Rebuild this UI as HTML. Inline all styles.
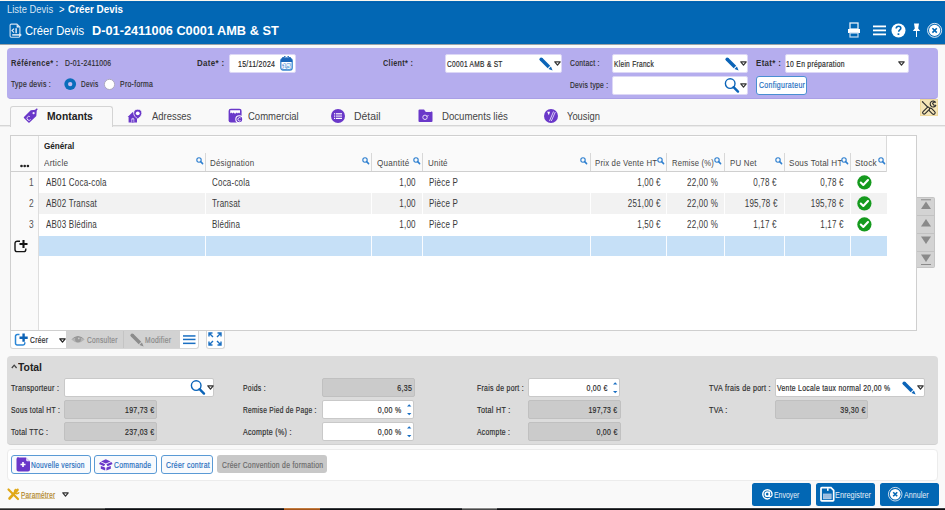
<!DOCTYPE html>
<html><head><meta charset="utf-8">
<style>
*{box-sizing:border-box;margin:0;padding:0}
html,body{width:945px;height:510px;overflow:hidden;background:#f9f9f9;font-family:"Liberation Sans",sans-serif;color:#333}
.a{position:absolute}
.t{position:absolute;white-space:pre;line-height:1}
svg{overflow:visible}
.s{-webkit-text-stroke:0.18px currentColor}
</style></head><body>
<div class="a" style="left:0px;top:0px;width:945px;height:44px;background:#0267b4"></div>
<div class="a" style="left:0px;top:0px;width:945px;height:1px;background:#fbf7ee"></div>
<div class="a" style="left:0px;top:2px;width:945px;height:1px;background:#015fae"></div>
<div class="a" style="left:0px;top:44px;width:945px;height:1px;background:#9aa3a8"></div>
<div class="t" style="left:6.7px;top:5px;font-size:10.17px;color:#d6e4f3;transform:scaleX(0.929);transform-origin:0 0;">Liste Devis</div>
<div class="t" style="left:58.7px;top:5px;font-size:10.17px;color:#fff;transform:scaleX(0.926);transform-origin:0 0;">&gt;</div>
<div class="t" style="left:68px;top:5px;font-size:10.17px;color:#fff;font-weight:bold;transform:scaleX(0.973);transform-origin:0 0;">Créer Devis</div>
<div class="t" style="left:25.4px;top:24px;font-size:13.08px;color:#fff;transform:scaleX(0.857);transform-origin:0 0;">Créer Devis</div>
<div class="t" style="left:91.6px;top:25px;font-size:12.65px;color:#fff;font-weight:bold;transform:scaleX(1.009);transform-origin:0 0;">D-01-2411006 C0001 AMB &amp; ST</div>
<svg class="a" style="left:9px;top:23px" width="14" height="15" viewBox="0 0 14 15"><path d="M1.1 2.3a1.2 1.2 0 0 1 1.2-1.2h5.6l3 3v8.9a1.2 1.2 0 0 1-1.2 1.2H2.3a1.2 1.2 0 0 1-1.2-1.2z" fill="none" stroke="#d3e2f1" stroke-width="1.1"/><path d="M7.6 1.2v3.2h3.2z" fill="#e6eef7"/><path d="M5 5.6l-2 2 2 2" fill="none" stroke="#e6eef7" stroke-width="1.2"/><rect x="6.3" y="5.2" width="1.7" height="5" fill="#c5d8ec"/><path d="M3.2 11.9h7.6" stroke="#e9f0f7" stroke-width="1.5"/><path d="M10.3 10.1l2.5 1.8-2.5 1.8z" fill="#e9f0f7"/></svg>
<svg class="a" style="left:847px;top:22px" width="14" height="16" viewBox="0 0 14 16"><rect x="3" y="1" width="8" height="6" fill="none" stroke="#e8f0f8" stroke-width="1.3"/><rect x="1" y="7" width="12" height="4" fill="#fff"/><rect x="3" y="11" width="8" height="4" fill="none" stroke="#c9dbee" stroke-width="1.2"/></svg>
<svg class="a" style="left:873px;top:25px" width="13" height="11" viewBox="0 0 13 11"><rect x="0" y="0.5" width="13" height="1.8" fill="#fff"/><rect x="0" y="4.5" width="13" height="1.8" fill="#fff"/><rect x="0" y="8.5" width="13" height="1.8" fill="#fff"/></svg>
<svg class="a" style="left:891px;top:23px" width="15" height="15" viewBox="0 0 15 15"><circle cx="7.5" cy="7.5" r="7" fill="#fff"/><path d="M5.2 5.6c0-1.5 1-2.3 2.3-2.3s2.3 .8 2.3 2c0 1.6-2.1 1.7-2.1 3.4" fill="none" stroke="#0267b4" stroke-width="1.6"/><rect x="6.6" y="10.3" width="1.7" height="1.7" fill="#0267b4"/></svg>
<svg class="a" style="left:912px;top:23px" width="9" height="14" viewBox="0 0 9 14"><path d="M2 0.5h5l-0.8 5 2 2.5h-7.4l2-2.5z" fill="#fff"/><rect x="4" y="8" width="1" height="6" fill="#fff"/></svg>
<svg class="a" style="left:927px;top:23px" width="16" height="16" viewBox="0 0 16 16"><circle cx="7.6" cy="7.4" r="7" fill="none" stroke="#e6eef7" stroke-width="1"/><circle cx="7.6" cy="7.4" r="5.6" fill="#fff"/><path d="M5.4 5.2l4.4 4.4M9.8 5.2l-4.4 4.4" stroke="#0267b4" stroke-width="1.6"/></svg>
<div class="a" style="left:7px;top:48px;width:931px;height:51px;background:#b5adee;border-bottom:1px solid #a99fe6;border-radius:4px"></div>
<div class="t" style="left:11px;top:60px;font-size:8.14px;color:#2e2e2e;font-weight:bold;transform:scaleX(0.923);transform-origin:0 0;letter-spacing:0.35px;">Référence* :</div>
<div class="t s" style="left:64.7px;top:60px;font-size:8.14px;color:#2e2e2e;transform:scaleX(0.836);transform-origin:0 0;letter-spacing:0.35px;">D-01-2411006</div>
<div class="t s" style="left:11px;top:81px;font-size:8.14px;color:#2e2e2e;transform:scaleX(0.842);transform-origin:0 0;letter-spacing:0.35px;">Type devis :</div>
<svg class="a" style="left:64px;top:78px" width="13" height="13" viewBox="0 0 13 13"><circle cx="6.2" cy="6.1" r="5.9" fill="#0a6dbb"/><circle cx="6.2" cy="6.1" r="2.2" fill="#c4bdf0"/></svg>
<div class="t s" style="left:80.8px;top:81px;font-size:8.14px;color:#2e2e2e;transform:scaleX(0.786);transform-origin:0 0;letter-spacing:0.35px;">Devis</div>
<svg class="a" style="left:104px;top:78px" width="13" height="13" viewBox="0 0 13 13"><circle cx="5.5" cy="6.4" r="5.1" fill="#fff" stroke="#a9a5b8" stroke-width="0.9"/></svg>
<div class="t s" style="left:119.9px;top:81px;font-size:8.14px;color:#2e2e2e;transform:scaleX(0.846);transform-origin:0 0;letter-spacing:0.35px;">Pro-forma</div>
<div class="t" style="left:197px;top:60px;font-size:8.14px;color:#2e2e2e;font-weight:bold;transform:scaleX(0.979);transform-origin:0 0;letter-spacing:0.35px;">Date* :</div>
<div class="a" style="left:229px;top:54px;width:67px;height:19px;background:#fff;border:1px solid #dcd7f6;border-radius:2px"></div>
<div class="t s" style="left:238px;top:61px;font-size:8.14px;color:#2a2a2a;transform:scaleX(0.855);transform-origin:0 0;letter-spacing:0.35px;">15/11/2024</div>
<svg class="a" style="left:280px;top:56px" width="14" height="15" viewBox="0 0 14 15"><rect x="0.8" y="2.6" width="11.4" height="11.4" rx="2.2" fill="none" stroke="#3a86d0" stroke-width="1.3"/><path d="M0.8 4.8a2.2 2.2 0 0 1 2.2-2.2h7a2.2 2.2 0 0 1 2.2 2.2v1.2h-11.4z" fill="#1a66b8"/><circle cx="3.2" cy="2.2" r="1.3" fill="#1a66b8"/><circle cx="6.5" cy="2.6" r="1.3" fill="#1a66b8"/><circle cx="9.8" cy="2.2" r="1.3" fill="#1a66b8"/><circle cx="4.8" cy="0.9" r="0.9" fill="#1a66b8"/><circle cx="8.2" cy="0.9" r="0.9" fill="#1a66b8"/><text x="6.5" y="12.9" font-size="7.6" font-weight="bold" text-anchor="middle" fill="#fff" stroke="#3a86d0" stroke-width="0.9" paint-order="stroke" font-family="Liberation Sans">15</text></svg>
<div class="t" style="left:383px;top:60px;font-size:8.14px;color:#2e2e2e;font-weight:bold;transform:scaleX(0.894);transform-origin:0 0;letter-spacing:0.35px;">Client* :</div>
<div class="a" style="left:445px;top:54px;width:117px;height:19px;background:#fff;border:1px solid #dcd7f6;border-radius:2px"></div>
<div class="t s" style="left:446.5px;top:61px;font-size:8.14px;color:#2a2a2a;transform:scaleX(0.812);transform-origin:0 0;letter-spacing:0.35px;">C0001 AMB &amp; ST</div>
<svg class="a" style="left:539px;top:57px" width="15" height="15" viewBox="0 0 15 15"><circle cx="2.2" cy="2.2" r="1.75" fill="#0b64b8"/><path d="M0.96 3.44 L3.44 0.96 L11.2 8.7 L8.7 11.2z" fill="#0b64b8"/><path d="M9.5 11.9 L11.9 9.5 L13.6 13.6z" fill="#0b64b8"/></svg>
<svg class="a" style="left:554px;top:61px" width="7" height="5" viewBox="0 0 7 5"><path d="M0.8 0.8h5.4l-2.7 3.4z" fill="none" stroke="#333" stroke-width="1.2" stroke-linejoin="round"/></svg>
<div class="t s" style="left:569.5px;top:60px;font-size:8.14px;color:#2e2e2e;transform:scaleX(0.834);transform-origin:0 0;letter-spacing:0.35px;">Contact :</div>
<div class="a" style="left:612px;top:54px;width:136px;height:19px;background:#fff;border:1px solid #dcd7f6;border-radius:2px"></div>
<div class="t s" style="left:614px;top:61px;font-size:8.14px;color:#2a2a2a;transform:scaleX(0.811);transform-origin:0 0;letter-spacing:0.35px;">Klein Franck</div>
<svg class="a" style="left:725px;top:57px" width="15" height="15" viewBox="0 0 15 15"><circle cx="2.2" cy="2.2" r="1.75" fill="#0b64b8"/><path d="M0.96 3.44 L3.44 0.96 L11.2 8.7 L8.7 11.2z" fill="#0b64b8"/><path d="M9.5 11.9 L11.9 9.5 L13.6 13.6z" fill="#0b64b8"/></svg>
<svg class="a" style="left:740px;top:61px" width="7" height="5" viewBox="0 0 7 5"><path d="M0.8 0.8h5.4l-2.7 3.4z" fill="none" stroke="#333" stroke-width="1.2" stroke-linejoin="round"/></svg>
<div class="t s" style="left:569.5px;top:82px;font-size:8.14px;color:#2e2e2e;transform:scaleX(0.822);transform-origin:0 0;letter-spacing:0.35px;">Devis type :</div>
<div class="a" style="left:612px;top:76px;width:136px;height:19px;background:#fff;border:1px solid #dcd7f6;border-radius:2px"></div>
<svg class="a" style="left:724px;top:78px" width="16" height="15" viewBox="0 0 16 15"><g transform="scale(1.0)"><circle cx="6.2" cy="5.6" r="4.8" fill="none" stroke="#0b64b8" stroke-width="1.4"/><path d="M9.6 9.2 L14 13.6" stroke="#0b64b8" stroke-width="2.4" stroke-linecap="round"/></g></svg>
<svg class="a" style="left:740px;top:83px" width="7" height="5" viewBox="0 0 7 5"><path d="M0.8 0.8h5.4l-2.7 3.4z" fill="none" stroke="#333" stroke-width="1.2" stroke-linejoin="round"/></svg>
<div class="t" style="left:755.6px;top:60px;font-size:8.14px;color:#2e2e2e;font-weight:bold;transform:scaleX(0.976);transform-origin:0 0;letter-spacing:0.35px;">Etat* :</div>
<div class="a" style="left:785px;top:54px;width:124px;height:19px;background:#fff;border:1px solid #dcd7f6;border-radius:2px"></div>
<div class="t s" style="left:786.3px;top:61px;font-size:8.14px;color:#2a2a2a;transform:scaleX(0.835);transform-origin:0 0;letter-spacing:0.35px;">10 En préparation</div>
<svg class="a" style="left:898px;top:61px" width="7" height="5" viewBox="0 0 7 5"><path d="M0.8 0.8h5.4l-2.7 3.4z" fill="none" stroke="#333" stroke-width="1.2" stroke-linejoin="round"/></svg>
<div class="a" style="left:756px;top:76px;width:51px;height:19px;background:#fff;border:1px solid #4a8fd2;border-radius:3px"></div>
<div class="t s" style="left:758.5px;top:82px;font-size:8.14px;color:#1f6fbf;transform:scaleX(0.859);transform-origin:0 0;letter-spacing:0.35px;">Configurateur</div>
<div class="a" style="left:0px;top:125px;width:945px;height:1px;background:#d6d6d6"></div>
<div class="a" style="left:0px;top:126px;width:945px;height:1px;background:#ebebeb"></div>
<div class="a" style="left:10px;top:106px;width:103px;height:21px;background:#f9f9f9;border:1px solid #d4d4d4;border-bottom:none;border-radius:3px 3px 0 0"></div>
<div class="a" style="left:11px;top:125px;width:101px;height:2px;background:#f9f9f9"></div>
<div class="t" style="left:46.6px;top:112px;font-size:10.17px;color:#222;font-weight:bold;transform:scaleX(1.016);transform-origin:0 0;">Montants</div>
<div class="t" style="left:151.8px;top:112px;font-size:10.17px;color:#444;transform:scaleX(0.929);transform-origin:0 0;">Adresses</div>
<div class="t" style="left:247.6px;top:112px;font-size:10.17px;color:#444;transform:scaleX(0.936);transform-origin:0 0;">Commercial</div>
<div class="t" style="left:354px;top:112px;font-size:10.17px;color:#444;transform:scaleX(1.023);transform-origin:0 0;">Détail</div>
<div class="t" style="left:441.5px;top:112px;font-size:10.17px;color:#444;transform:scaleX(0.948);transform-origin:0 0;">Documents liés</div>
<div class="t" style="left:567.1px;top:112px;font-size:10.17px;color:#444;transform:scaleX(0.924);transform-origin:0 0;">Yousign</div>
<svg class="a" style="left:23px;top:108px" width="16" height="16" viewBox="0 0 16 16"><path d="M1.5 9.5 L8 3 L13 2.5 L12.6 7.6 L6 14z" fill="#6a38c9" stroke="#6a38c9" stroke-width="1.5" stroke-linejoin="round"/><path d="M11.5 3.5 L14.3 0.8" stroke="#6a38c9" stroke-width="1.4"/><circle cx="10.6" cy="5.2" r="1.1" fill="#f0eafc"/><path d="M6.8 8.5a2 2 0 1 0 .8 3" fill="none" stroke="#e6dcf8" stroke-width="1"/></svg>
<svg class="a" style="left:127px;top:109px" width="16" height="15" viewBox="0 0 16 15"><path d="M0.6 8 L5.8 3 L11 8 H10 V13.6 H1.6 V8z" fill="#6a38c9"/><path d="M4.3 13.6 V10.2 a1.5 1.5 0 0 1 3 0 V13.6" fill="#c9b6ef"/><rect x="5.2" y="10.6" width="1.2" height="3" fill="#6a38c9"/><path d="M10.75 0.2 a4.1 4.1 0 0 1 4.1 4.1 c0 2.4 -2.4 4.3 -4.1 5.7 c-1.7 -1.4 -4.1 -3.3 -4.1 -5.7 a4.1 4.1 0 0 1 4.1 -4.1z" fill="#6a38c9" stroke="#f9f9f9" stroke-width="0.8"/><circle cx="10.75" cy="4.3" r="1.9" fill="#fff"/></svg>
<svg class="a" style="left:228px;top:108px" width="16" height="16" viewBox="0 0 16 16"><rect x="0.6" y="0.8" width="13" height="13.6" rx="2.2" fill="#6a38c9"/><path d="M2.2 2.3 H12 V5.6 L11 4.6 L9.9 5.6 L8.8 4.6 L7.7 5.6 H6.6 L5.5 4.6 L4.4 5.6 L3.3 4.6 L2.2 5.6z" fill="#fff"/><circle cx="11.3" cy="11.3" r="3.5" fill="#6a38c9" stroke="#fff" stroke-width="1.1"/><path d="M12.6 9.9 a1.7 1.7 0 1 0 0 2.8" fill="none" stroke="#fff" stroke-width="0.9"/></svg>
<svg class="a" style="left:331px;top:109px" width="15" height="15" viewBox="0 0 15 15"><circle cx="7" cy="7" r="7" fill="#6a38c9"/><rect x="3" y="4.2" width="1.2" height="1.2" fill="#fff"/><rect x="5" y="4.2" width="6" height="1.2" fill="#fff"/><rect x="3" y="6.5" width="1.2" height="1.2" fill="#fff"/><rect x="5" y="6.5" width="6" height="1.2" fill="#e8e0f8"/><rect x="3" y="8.8" width="1.2" height="1.2" fill="#fff"/><rect x="5" y="8.8" width="6" height="1.2" fill="#fff"/></svg>
<svg class="a" style="left:418px;top:109px" width="15" height="14" viewBox="0 0 15 14"><path d="M0.5 1.5a1 1 0 0 1 1-1h4.5l1.8 2h5.7a1 1 0 0 1 1 1v8.5a1 1 0 0 1-1 1h-12a1 1 0 0 1-1-1z" fill="#6a38c9"/><path d="M6.5 1.3h6.5v1.6h-5z" fill="#f3eefc"/><circle cx="7" cy="8.3" r="2.2" fill="none" stroke="#e3d8f7" stroke-width="1"/><path d="M8.5 7.5l2-1" stroke="#e3d8f7" stroke-width="0.9"/></svg>
<svg class="a" style="left:544px;top:109px" width="15" height="15" viewBox="0 0 15 15"><circle cx="7" cy="7" r="7" fill="#6a38c9"/><path d="M3.2 2.8h2.8l-1.2 3.4z" fill="#fff"/><path d="M9.5 2.5 L5.5 12" stroke="#d7c9f4" stroke-width="1"/><path d="M11.3 3 L7.3 12" stroke="#d7c9f4" stroke-width="1"/></svg>
<div class="a" style="left:920px;top:99px;width:18px;height:17px;background:#f4e4b6;border:1px solid #eed89c"></div>
<svg class="a" style="left:920px;top:99px" width="18" height="17" viewBox="0 0 18 17"><path d="M2.3 2.6 L9 9.3" stroke="#2a2a2a" stroke-width="1.2"/><path d="M1.6 1.9 L3.3 2.4 L2.8 3.6z" fill="#2a2a2a"/><g transform="rotate(45 12 12.2)"><rect x="8.4" y="10.6" width="7.4" height="3.2" rx="1.6" fill="#f4e4b6" stroke="#2a2a2a" stroke-width="1.1"/></g><g transform="rotate(-45 6 11.6)"><rect x="1.8" y="10.2" width="8.6" height="2.9" rx="1.45" fill="#f4e4b6" stroke="#2a2a2a" stroke-width="1.1"/></g><path d="M15.6 3.2 A3 3 0 1 0 15.8 6.4 L13.6 6 L12.6 4.4 L13.6 3z" fill="#f4e4b6" stroke="#2a2a2a" stroke-width="1.1" stroke-linejoin="round"/></svg>
<div class="a" style="left:10px;top:135px;width:907px;height:196px;background:#fff;border:1px solid #cfcfcf"></div>
<div class="a" style="left:11px;top:137px;width:876px;height:34px;background:#fafafa"></div>
<div class="a" style="left:11px;top:136px;width:27px;height:194px;background:#fafafa"></div>
<div class="a" style="left:38px;top:136px;width:1px;height:194px;background:#dedede"></div>
<div class="a" style="left:11px;top:171px;width:876px;height:1px;background:#cfcfcf"></div>
<div class="a" style="left:886px;top:136px;width:1px;height:36px;background:#dadada"></div>
<div class="a" style="left:39px;top:193px;width:848px;height:21px;background:#f2f2f2"></div>
<div class="a" style="left:39px;top:236px;width:848px;height:20px;background:#c6e0f7"></div>
<div class="a" style="left:205px;top:153px;width:1px;height:18px;background:#d8d8d8"></div>
<div class="a" style="left:205px;top:172px;width:1px;height:84px;background:rgba(255,255,255,0.9)"></div>
<div class="a" style="left:371px;top:153px;width:1px;height:18px;background:#d8d8d8"></div>
<div class="a" style="left:371px;top:172px;width:1px;height:84px;background:rgba(255,255,255,0.9)"></div>
<div class="a" style="left:422px;top:153px;width:1px;height:18px;background:#d8d8d8"></div>
<div class="a" style="left:422px;top:172px;width:1px;height:84px;background:rgba(255,255,255,0.9)"></div>
<div class="a" style="left:590px;top:153px;width:1px;height:18px;background:#d8d8d8"></div>
<div class="a" style="left:590px;top:172px;width:1px;height:84px;background:rgba(255,255,255,0.9)"></div>
<div class="a" style="left:666px;top:153px;width:1px;height:18px;background:#d8d8d8"></div>
<div class="a" style="left:666px;top:172px;width:1px;height:84px;background:rgba(255,255,255,0.9)"></div>
<div class="a" style="left:724px;top:153px;width:1px;height:18px;background:#d8d8d8"></div>
<div class="a" style="left:724px;top:172px;width:1px;height:84px;background:rgba(255,255,255,0.9)"></div>
<div class="a" style="left:784px;top:153px;width:1px;height:18px;background:#d8d8d8"></div>
<div class="a" style="left:784px;top:172px;width:1px;height:84px;background:rgba(255,255,255,0.9)"></div>
<div class="a" style="left:850px;top:153px;width:1px;height:18px;background:#d8d8d8"></div>
<div class="a" style="left:850px;top:172px;width:1px;height:84px;background:rgba(255,255,255,0.9)"></div>
<div class="t" style="left:44.2px;top:142px;font-size:9.3px;color:#222;font-weight:bold;transform:scaleX(0.875);transform-origin:0 0;">Général</div>
<div class="t" style="left:44.2px;top:159px;font-size:9.3px;color:#464646;transform:scaleX(0.878);transform-origin:0 0;letter-spacing:0.25px;">Article</div>
<div class="t" style="left:210.3px;top:159px;font-size:9.3px;color:#464646;transform:scaleX(0.856);transform-origin:0 0;letter-spacing:0.25px;">Désignation</div>
<div class="t" style="left:376.7px;top:159px;font-size:9.3px;color:#464646;transform:scaleX(0.872);transform-origin:0 0;letter-spacing:0.25px;">Quantité</div>
<div class="t" style="left:427.7px;top:159px;font-size:9.3px;color:#464646;transform:scaleX(0.860);transform-origin:0 0;letter-spacing:0.25px;">Unité</div>
<div class="t" style="left:595px;top:159px;font-size:9.3px;color:#464646;transform:scaleX(0.837);transform-origin:0 0;letter-spacing:0.25px;">Prix de Vente HT</div>
<div class="t" style="left:671.6px;top:159px;font-size:9.3px;color:#464646;transform:scaleX(0.824);transform-origin:0 0;letter-spacing:0.25px;">Remise (%)</div>
<div class="t" style="left:729.5px;top:159px;font-size:9.3px;color:#464646;transform:scaleX(0.849);transform-origin:0 0;letter-spacing:0.25px;">PU Net</div>
<div class="t" style="left:788.6px;top:159px;font-size:9.3px;color:#464646;transform:scaleX(0.872);transform-origin:0 0;letter-spacing:0.25px;">Sous Total HT</div>
<div class="t" style="left:854.5px;top:159px;font-size:9.3px;color:#464646;transform:scaleX(0.895);transform-origin:0 0;letter-spacing:0.25px;">Stock</div>
<svg class="a" style="left:196px;top:156.5px" width="8" height="8" viewBox="0 0 8 8"><circle cx="3" cy="3" r="2.2" fill="none" stroke="#2d7fd0" stroke-width="1.1"/><path d="M4.6 4.6 L6.6 6.6" stroke="#2d7fd0" stroke-width="1.5" stroke-linecap="round"/></svg>
<svg class="a" style="left:361.5px;top:156.5px" width="8" height="8" viewBox="0 0 8 8"><circle cx="3" cy="3" r="2.2" fill="none" stroke="#2d7fd0" stroke-width="1.1"/><path d="M4.6 4.6 L6.6 6.6" stroke="#2d7fd0" stroke-width="1.5" stroke-linecap="round"/></svg>
<svg class="a" style="left:413px;top:156.5px" width="8" height="8" viewBox="0 0 8 8"><circle cx="3" cy="3" r="2.2" fill="none" stroke="#2d7fd0" stroke-width="1.1"/><path d="M4.6 4.6 L6.6 6.6" stroke="#2d7fd0" stroke-width="1.5" stroke-linecap="round"/></svg>
<svg class="a" style="left:580px;top:156.5px" width="8" height="8" viewBox="0 0 8 8"><circle cx="3" cy="3" r="2.2" fill="none" stroke="#2d7fd0" stroke-width="1.1"/><path d="M4.6 4.6 L6.6 6.6" stroke="#2d7fd0" stroke-width="1.5" stroke-linecap="round"/></svg>
<svg class="a" style="left:657px;top:156.5px" width="8" height="8" viewBox="0 0 8 8"><circle cx="3" cy="3" r="2.2" fill="none" stroke="#2d7fd0" stroke-width="1.1"/><path d="M4.6 4.6 L6.6 6.6" stroke="#2d7fd0" stroke-width="1.5" stroke-linecap="round"/></svg>
<svg class="a" style="left:714px;top:156.5px" width="8" height="8" viewBox="0 0 8 8"><circle cx="3" cy="3" r="2.2" fill="none" stroke="#2d7fd0" stroke-width="1.1"/><path d="M4.6 4.6 L6.6 6.6" stroke="#2d7fd0" stroke-width="1.5" stroke-linecap="round"/></svg>
<svg class="a" style="left:774.5px;top:156.5px" width="8" height="8" viewBox="0 0 8 8"><circle cx="3" cy="3" r="2.2" fill="none" stroke="#2d7fd0" stroke-width="1.1"/><path d="M4.6 4.6 L6.6 6.6" stroke="#2d7fd0" stroke-width="1.5" stroke-linecap="round"/></svg>
<svg class="a" style="left:841px;top:156.5px" width="8" height="8" viewBox="0 0 8 8"><circle cx="3" cy="3" r="2.2" fill="none" stroke="#2d7fd0" stroke-width="1.1"/><path d="M4.6 4.6 L6.6 6.6" stroke="#2d7fd0" stroke-width="1.5" stroke-linecap="round"/></svg>
<svg class="a" style="left:878px;top:156.5px" width="8" height="8" viewBox="0 0 8 8"><circle cx="3" cy="3" r="2.2" fill="none" stroke="#2d7fd0" stroke-width="1.1"/><path d="M4.6 4.6 L6.6 6.6" stroke="#2d7fd0" stroke-width="1.5" stroke-linecap="round"/></svg>
<svg class="a" style="left:20px;top:164px" width="10" height="4" viewBox="0 0 10 4"><circle cx="1.5" cy="2" r="1.3" fill="#222"/><circle cx="4.7" cy="2" r="1.3" fill="#222"/><circle cx="7.9" cy="2" r="1.3" fill="#222"/></svg>
<div class="t" style="right:910.79px;top:178px;font-size:10.17px;color:#555;transform:scaleX(0.825);transform-origin:100% 0;letter-spacing:0.25px;">1</div>
<div class="t" style="left:45.5px;top:178px;font-size:10.17px;color:#3a3a3a;transform:scaleX(0.790);transform-origin:0 0;letter-spacing:0.25px;">AB01 Coca-cola</div>
<div class="t" style="left:212px;top:178px;font-size:10.17px;color:#3a3a3a;transform:scaleX(0.790);transform-origin:0 0;letter-spacing:0.25px;">Coca-cola</div>
<div class="t" style="right:528.80px;top:178px;font-size:10.17px;color:#3a3a3a;transform:scaleX(0.795);transform-origin:100% 0;letter-spacing:0.25px;">1,00</div>
<div class="t" style="left:429px;top:178px;font-size:10.17px;color:#3a3a3a;transform:scaleX(0.791);transform-origin:0 0;letter-spacing:0.25px;">Pièce P</div>
<div class="t" style="right:284.30px;top:178px;font-size:10.17px;color:#3a3a3a;transform:scaleX(0.790);transform-origin:100% 0;letter-spacing:0.25px;">1,00 €</div>
<div class="t" style="right:226.80px;top:178px;font-size:10.17px;color:#3a3a3a;transform:scaleX(0.793);transform-origin:100% 0;letter-spacing:0.25px;">22,00 %</div>
<div class="t" style="right:167.80px;top:178px;font-size:10.17px;color:#3a3a3a;transform:scaleX(0.790);transform-origin:100% 0;letter-spacing:0.25px;">0,78 €</div>
<div class="t" style="right:101.30px;top:178px;font-size:10.17px;color:#3a3a3a;transform:scaleX(0.790);transform-origin:100% 0;letter-spacing:0.25px;">0,78 €</div>
<svg class="a" style="left:857px;top:175px" width="15" height="15" viewBox="0 0 15 15"><circle cx="7.4" cy="7.4" r="7.1" fill="#159a1e"/><path d="M3.8 7.6 L6.3 10 L11 5" fill="none" stroke="#fff" stroke-width="2.1" stroke-linecap="round" stroke-linejoin="round"/></svg>
<div class="t" style="right:910.79px;top:199px;font-size:10.17px;color:#555;transform:scaleX(0.825);transform-origin:100% 0;letter-spacing:0.25px;">2</div>
<div class="t" style="left:45.5px;top:199px;font-size:10.17px;color:#3a3a3a;transform:scaleX(0.790);transform-origin:0 0;letter-spacing:0.25px;">AB02 Transat</div>
<div class="t" style="left:212px;top:199px;font-size:10.17px;color:#3a3a3a;transform:scaleX(0.790);transform-origin:0 0;letter-spacing:0.25px;">Transat</div>
<div class="t" style="right:528.80px;top:199px;font-size:10.17px;color:#3a3a3a;transform:scaleX(0.795);transform-origin:100% 0;letter-spacing:0.25px;">1,00</div>
<div class="t" style="left:429px;top:199px;font-size:10.17px;color:#3a3a3a;transform:scaleX(0.791);transform-origin:0 0;letter-spacing:0.25px;">Pièce P</div>
<div class="t" style="right:284.30px;top:199px;font-size:10.17px;color:#3a3a3a;transform:scaleX(0.790);transform-origin:100% 0;letter-spacing:0.25px;">251,00 €</div>
<div class="t" style="right:226.80px;top:199px;font-size:10.17px;color:#3a3a3a;transform:scaleX(0.793);transform-origin:100% 0;letter-spacing:0.25px;">22,00 %</div>
<div class="t" style="right:167.80px;top:199px;font-size:10.17px;color:#3a3a3a;transform:scaleX(0.790);transform-origin:100% 0;letter-spacing:0.25px;">195,78 €</div>
<div class="t" style="right:101.30px;top:199px;font-size:10.17px;color:#3a3a3a;transform:scaleX(0.790);transform-origin:100% 0;letter-spacing:0.25px;">195,78 €</div>
<svg class="a" style="left:857px;top:196px" width="15" height="15" viewBox="0 0 15 15"><circle cx="7.4" cy="7.4" r="7.1" fill="#159a1e"/><path d="M3.8 7.6 L6.3 10 L11 5" fill="none" stroke="#fff" stroke-width="2.1" stroke-linecap="round" stroke-linejoin="round"/></svg>
<div class="t" style="right:910.79px;top:220px;font-size:10.17px;color:#555;transform:scaleX(0.825);transform-origin:100% 0;letter-spacing:0.25px;">3</div>
<div class="t" style="left:45.5px;top:220px;font-size:10.17px;color:#3a3a3a;transform:scaleX(0.790);transform-origin:0 0;letter-spacing:0.25px;">AB03 Blédina</div>
<div class="t" style="left:212px;top:220px;font-size:10.17px;color:#3a3a3a;transform:scaleX(0.790);transform-origin:0 0;letter-spacing:0.25px;">Blédina</div>
<div class="t" style="right:528.80px;top:220px;font-size:10.17px;color:#3a3a3a;transform:scaleX(0.795);transform-origin:100% 0;letter-spacing:0.25px;">1,00</div>
<div class="t" style="left:429px;top:220px;font-size:10.17px;color:#3a3a3a;transform:scaleX(0.791);transform-origin:0 0;letter-spacing:0.25px;">Pièce P</div>
<div class="t" style="right:284.30px;top:220px;font-size:10.17px;color:#3a3a3a;transform:scaleX(0.790);transform-origin:100% 0;letter-spacing:0.25px;">1,50 €</div>
<div class="t" style="right:226.80px;top:220px;font-size:10.17px;color:#3a3a3a;transform:scaleX(0.793);transform-origin:100% 0;letter-spacing:0.25px;">22,00 %</div>
<div class="t" style="right:167.80px;top:220px;font-size:10.17px;color:#3a3a3a;transform:scaleX(0.790);transform-origin:100% 0;letter-spacing:0.25px;">1,17 €</div>
<div class="t" style="right:101.30px;top:220px;font-size:10.17px;color:#3a3a3a;transform:scaleX(0.790);transform-origin:100% 0;letter-spacing:0.25px;">1,17 €</div>
<svg class="a" style="left:857px;top:217px" width="15" height="15" viewBox="0 0 15 15"><circle cx="7.4" cy="7.4" r="7.1" fill="#159a1e"/><path d="M3.8 7.6 L6.3 10 L11 5" fill="none" stroke="#fff" stroke-width="2.1" stroke-linecap="round" stroke-linejoin="round"/></svg>
<svg class="a" style="left:14px;top:239px" width="15" height="14" viewBox="0 0 15 14"><path d="M6 2.2H3.2a2.2 2.2 0 0 0-2.2 2.2v6a2.2 2.2 0 0 0 2.2 2.2h6.4a2.2 2.2 0 0 0 2.2-2.2V9.5" fill="none" stroke="#141414" stroke-width="1.4"/><path d="M9.5 1v8M5.5 5h8" stroke="#141414" stroke-width="2.1"/></svg>
<div class="a" style="left:917px;top:197px;width:18px;height:71px;background:#d3d3d3;border:1px solid #c4c4c4;border-left:none;border-radius:0 2px 2px 0"></div>
<div class="a" style="left:917px;top:214.5px;width:17px;height:1px;background:#c2c2c2"></div>
<div class="a" style="left:917px;top:232.5px;width:17px;height:1px;background:#c2c2c2"></div>
<div class="a" style="left:917px;top:250.5px;width:17px;height:1px;background:#c2c2c2"></div>
<svg class="a" style="left:917px;top:197px" width="18" height="72" viewBox="0 0 18 72"><rect x="4" y="2.3" width="10" height="1" fill="#8a8a8a"/><path d="M9 4.5 L14 12 H4z" fill="#8a8a8a"/><path d="M9 22 L14 29.5 H4z" fill="#8a8a8a"/><path d="M9 47 L14 39.5 H4z" fill="#8a8a8a"/><path d="M9 65 L14 57.5 H4z" fill="#8a8a8a"/><rect x="4" y="67" width="10" height="1" fill="#8a8a8a"/></svg>
<div class="a" style="left:10px;top:331px;width:189px;height:17.5px;background:#fff;border:1px solid #d6d6d6;border-top:none;border-radius:0 0 3px 3px"></div>
<div class="a" style="left:66px;top:331px;width:113.5px;height:16.5px;background:#d2d2d2"></div>
<div class="a" style="left:123px;top:331px;width:1px;height:16.5px;background:#c4c4c4"></div>
<svg class="a" style="left:14px;top:333px" width="16" height="14" viewBox="0 0 16 14"><path d="M5.5 1.6H3.2a1.7 1.7 0 0 0-1.7 1.7v6.9a1.7 1.7 0 0 0 1.7 1.7h5.9a1.7 1.7 0 0 0 1.7-1.7V9.2" fill="none" stroke="#2b86d6" stroke-width="1.5"/><path d="M9.6 0.6v8.2M5.5 4.7h8.2" stroke="#0d63b6" stroke-width="2.4"/></svg>
<div class="t s" style="left:29.6px;top:337px;font-size:8.14px;color:#2a2a2a;transform:scaleX(0.827);transform-origin:0 0;letter-spacing:0.35px;">Créer</div>
<svg class="a" style="left:59px;top:337.5px" width="7" height="5" viewBox="0 0 7 5"><path d="M0.8 0.8h5.4l-2.7 3.4z" fill="none" stroke="#222" stroke-width="1.2" stroke-linejoin="round"/></svg>
<svg class="a" style="left:71px;top:333.5px" width="14" height="11" viewBox="0 0 14 11"><path d="M0.4 5.5 Q7 -1.2 13.6 5.5 Q7 12 0.4 5.5z" fill="#b4b4b4"/><path d="M0.4 5.5 Q7 -1.2 13.6 5.5 Q7 1.2 0.4 5.5z" fill="#8a8a8a"/><circle cx="7" cy="5.4" r="2.9" fill="#999"/><circle cx="7.8" cy="4.4" r="0.9" fill="#c8c8c8"/></svg>
<div class="t s" style="left:86.7px;top:337px;font-size:8.14px;color:#8a8a8a;transform:scaleX(0.810);transform-origin:0 0;letter-spacing:0.35px;">Consulter</div>
<svg class="a" style="left:129.5px;top:332.5px" width="15" height="15" viewBox="0 0 15 15"><circle cx="2.2" cy="2.2" r="1.75" fill="#8c8c8c"/><path d="M0.96 3.44 L3.44 0.96 L11.2 8.7 L8.7 11.2z" fill="#8c8c8c"/><path d="M9.5 11.9 L11.9 9.5 L13.6 13.6z" fill="#8c8c8c"/></svg>
<div class="t s" style="left:145.3px;top:337px;font-size:8.14px;color:#8a8a8a;transform:scaleX(0.828);transform-origin:0 0;letter-spacing:0.35px;">Modifier</div>
<svg class="a" style="left:183px;top:335px" width="13" height="10" viewBox="0 0 13 10"><rect x="0" y="0.2" width="12.5" height="1.5" fill="#1a6fc2"/><rect x="0" y="3.7" width="12.5" height="1.5" fill="#1a6fc2"/><rect x="0" y="7.6" width="12.5" height="1.5" fill="#1a6fc2"/></svg>
<div class="a" style="left:206px;top:331px;width:18.5px;height:17.5px;background:#fff;border:1px solid #d6d6d6;border-top:none;border-radius:0 0 3px 3px"></div>
<svg class="a" style="left:208px;top:332px" width="15" height="14" viewBox="0 0 15 14"><g stroke="#1a6fc2" stroke-width="1.4" fill="none"><path d="M1 4.5V1H4.5M1 1L5 5"/><path d="M13 4.5V1H9.5M13 1L9 5"/><path d="M1 9.5V13H4.5M1 13L5 9"/><path d="M13 9.5V13H9.5M13 13L9 9"/></g></svg>
<div class="a" style="left:7px;top:356px;width:931px;height:89px;background:#dcdcdc;border-bottom:1px solid #d0d0d0;border-radius:4px"></div>
<svg class="a" style="left:11px;top:364px" width="7" height="5" viewBox="0 0 7 5"><path d="M0.8 4 L3.2 1.2 L5.6 4" fill="none" stroke="#444" stroke-width="1.3"/></svg>
<div class="t" style="left:18px;top:362px;font-size:11.19px;color:#222;font-weight:bold;transform:scaleX(0.927);transform-origin:0 0;">Total</div>
<div class="t s" style="left:11px;top:385px;font-size:8.14px;color:#2e2e2e;transform:scaleX(0.867);transform-origin:0 0;letter-spacing:0.35px;">Transporteur :</div>
<div class="a" style="left:64px;top:378px;width:150px;height:19px;background:#fff;border:1px solid #c9c9c9;border-radius:2px"></div>
<svg class="a" style="left:190px;top:380px" width="16" height="15" viewBox="0 0 16 15"><g transform="scale(1.0)"><circle cx="6.2" cy="5.6" r="4.8" fill="none" stroke="#0b64b8" stroke-width="1.4"/><path d="M9.6 9.2 L14 13.6" stroke="#0b64b8" stroke-width="2.4" stroke-linecap="round"/></g></svg>
<svg class="a" style="left:206.5px;top:385px" width="7" height="5" viewBox="0 0 7 5"><path d="M0.8 0.8h5.4l-2.7 3.4z" fill="none" stroke="#333" stroke-width="1.2" stroke-linejoin="round"/></svg>
<div class="t s" style="left:11px;top:407px;font-size:8.14px;color:#2e2e2e;transform:scaleX(0.836);transform-origin:0 0;letter-spacing:0.35px;">Sous total HT :</div>
<div class="a" style="left:64px;top:400px;width:93px;height:19px;background:#cbcbcb;border:1px solid #c0c0c0;border-radius:2px"></div>
<div class="t s" style="right:790.20px;top:407px;font-size:8.14px;color:#2a2a2a;transform:scaleX(0.855);transform-origin:100% 0;letter-spacing:0.35px;">197,73 €</div>
<div class="t s" style="left:11px;top:429px;font-size:8.14px;color:#2e2e2e;transform:scaleX(0.857);transform-origin:0 0;letter-spacing:0.35px;">Total TTC :</div>
<div class="a" style="left:64px;top:422px;width:93px;height:19px;background:#cbcbcb;border:1px solid #c0c0c0;border-radius:2px"></div>
<div class="t s" style="right:790.20px;top:429px;font-size:8.14px;color:#2a2a2a;transform:scaleX(0.855);transform-origin:100% 0;letter-spacing:0.35px;">237,03 €</div>
<div class="t s" style="left:243.4px;top:385px;font-size:8.14px;color:#2e2e2e;transform:scaleX(0.837);transform-origin:0 0;letter-spacing:0.35px;">Poids :</div>
<div class="a" style="left:322px;top:378px;width:93px;height:19px;background:#cbcbcb;border:1px solid #c0c0c0;border-radius:2px"></div>
<div class="t s" style="right:532.70px;top:385px;font-size:8.14px;color:#2a2a2a;transform:scaleX(0.864);transform-origin:100% 0;letter-spacing:0.35px;">6,35</div>
<div class="t s" style="left:243.4px;top:407px;font-size:8.14px;color:#2e2e2e;transform:scaleX(0.815);transform-origin:0 0;letter-spacing:0.35px;">Remise Pied de Page :</div>
<div class="a" style="left:322px;top:400px;width:92px;height:19px;background:#fff;border:1px solid #c9c9c9;border-radius:2px"></div>
<div class="t s" style="right:543.70px;top:407px;font-size:8.14px;color:#2a2a2a;transform:scaleX(0.860);transform-origin:100% 0;letter-spacing:0.35px;">0,00 %</div>
<svg class="a" style="left:406.5px;top:404px" width="5" height="12" viewBox="0 0 5 12"><path d="M0 2.4 L2.2 0.2 L4.4 2.4z" fill="#1a6fc2"/><path d="M0 9 L2.2 11.2 L4.4 9z" fill="#1a6fc2"/></svg>
<div class="t s" style="left:243.4px;top:429px;font-size:8.14px;color:#2e2e2e;transform:scaleX(0.871);transform-origin:0 0;letter-spacing:0.35px;">Acompte (%) :</div>
<div class="a" style="left:322px;top:422px;width:92px;height:19px;background:#fff;border:1px solid #c9c9c9;border-radius:2px"></div>
<div class="t s" style="right:543.70px;top:429px;font-size:8.14px;color:#2a2a2a;transform:scaleX(0.860);transform-origin:100% 0;letter-spacing:0.35px;">0,00 %</div>
<svg class="a" style="left:406.5px;top:426px" width="5" height="12" viewBox="0 0 5 12"><path d="M0 2.4 L2.2 0.2 L4.4 2.4z" fill="#1a6fc2"/><path d="M0 9 L2.2 11.2 L4.4 9z" fill="#1a6fc2"/></svg>
<div class="t s" style="left:476.5px;top:385px;font-size:8.14px;color:#2e2e2e;transform:scaleX(0.849);transform-origin:0 0;letter-spacing:0.35px;">Frais de port :</div>
<div class="a" style="left:528px;top:378px;width:92px;height:19px;background:#fff;border:1px solid #c9c9c9;border-radius:2px"></div>
<div class="t s" style="right:337.70px;top:385px;font-size:8.14px;color:#2a2a2a;transform:scaleX(0.861);transform-origin:100% 0;letter-spacing:0.35px;">0,00 €</div>
<svg class="a" style="left:612.5px;top:382px" width="5" height="12" viewBox="0 0 5 12"><path d="M0 2.4 L2.2 0.2 L4.4 2.4z" fill="#1a6fc2"/><path d="M0 9 L2.2 11.2 L4.4 9z" fill="#1a6fc2"/></svg>
<div class="t s" style="left:476.5px;top:407px;font-size:8.14px;color:#2e2e2e;transform:scaleX(0.883);transform-origin:0 0;letter-spacing:0.35px;">Total HT :</div>
<div class="a" style="left:528px;top:400px;width:92.5px;height:19px;background:#cbcbcb;border:1px solid #c0c0c0;border-radius:2px"></div>
<div class="t s" style="right:327.71px;top:407px;font-size:8.14px;color:#2a2a2a;transform:scaleX(0.841);transform-origin:100% 0;letter-spacing:0.35px;">197,73 €</div>
<div class="t s" style="left:476.5px;top:429px;font-size:8.14px;color:#2e2e2e;transform:scaleX(0.837);transform-origin:0 0;letter-spacing:0.35px;">Acompte :</div>
<div class="a" style="left:528px;top:422px;width:92.5px;height:19px;background:#cbcbcb;border:1px solid #c0c0c0;border-radius:2px"></div>
<div class="t s" style="right:327.70px;top:429px;font-size:8.14px;color:#2a2a2a;transform:scaleX(0.861);transform-origin:100% 0;letter-spacing:0.35px;">0,00 €</div>
<div class="t s" style="left:709.4px;top:385px;font-size:8.14px;color:#2e2e2e;transform:scaleX(0.870);transform-origin:0 0;letter-spacing:0.35px;">TVA frais de port :</div>
<div class="a" style="left:775px;top:378px;width:150px;height:19px;background:#fff;border:1px solid #c9c9c9;border-radius:2px"></div>
<div class="t s" style="left:777px;top:385px;font-size:8.14px;color:#2a2a2a;transform:scaleX(0.840);transform-origin:0 0;letter-spacing:0.35px;">Vente Locale taux normal 20,00 %</div>
<svg class="a" style="left:902px;top:381px" width="15" height="15" viewBox="0 0 15 15"><circle cx="2.2" cy="2.2" r="1.75" fill="#0b64b8"/><path d="M0.96 3.44 L3.44 0.96 L11.2 8.7 L8.7 11.2z" fill="#0b64b8"/><path d="M9.5 11.9 L11.9 9.5 L13.6 13.6z" fill="#0b64b8"/></svg>
<svg class="a" style="left:917px;top:385px" width="7" height="5" viewBox="0 0 7 5"><path d="M0.8 0.8h5.4l-2.7 3.4z" fill="none" stroke="#333" stroke-width="1.2" stroke-linejoin="round"/></svg>
<div class="t s" style="left:709.4px;top:407px;font-size:8.14px;color:#2e2e2e;transform:scaleX(0.889);transform-origin:0 0;letter-spacing:0.35px;">TVA :</div>
<div class="a" style="left:775px;top:400px;width:93px;height:19px;background:#cbcbcb;border:1px solid #c0c0c0;border-radius:2px"></div>
<div class="t s" style="right:79.70px;top:407px;font-size:8.14px;color:#2a2a2a;transform:scaleX(0.858);transform-origin:100% 0;letter-spacing:0.35px;">39,30 €</div>
<div class="a" style="left:7px;top:449px;width:931px;height:32px;background:#fff;border:1px solid #ececec;border-radius:4px"></div>
<div class="a" style="left:11px;top:455px;width:79.5px;height:19px;background:#f8fafd;border:1.2px solid #5a9ad5;border-radius:3px"></div>
<svg class="a" style="left:15.5px;top:457px" width="15" height="15" viewBox="0 0 15 15"><path d="M2.5 0.5h7.5l4 4v8a2 2 0 0 1-2 2h-9.5a2 2 0 0 1-2-2v-10.5a2 2 0 0 1 2-2z" fill="#6a38c9"/><path d="M10.2 0.8 L13.7 4.3 H11.2a1 1 0 0 1-1-1z" fill="#e9e1fa"/><path d="M7 5v5M4.5 7.5h5" stroke="#fff" stroke-width="1.6"/></svg>
<div class="t s" style="left:31px;top:462px;font-size:8.14px;color:#1f6dbd;transform:scaleX(0.818);transform-origin:0 0;letter-spacing:0.35px;">Nouvelle version</div>
<div class="a" style="left:94px;top:455px;width:63px;height:19px;background:#f8fafd;border:1.2px solid #5a9ad5;border-radius:3px"></div>
<svg class="a" style="left:99px;top:458.5px" width="14" height="12" viewBox="0 0 14 12"><path d="M6.8 0.3 L11.6 2.4 L6.8 4.5 L2 2.4z" fill="#6a38c9"/><path d="M1.2 3.1 L6.2 5.2 L5 7.2 L0 5.1z" fill="#6a38c9"/><path d="M12.4 3.1 L7.4 5.2 L8.6 7.2 L13.6 5.1z" fill="#6a38c9"/><path d="M1.8 7 L6.2 8.6 V11.4 L1.8 9.7z" fill="#6a38c9"/><path d="M11.8 7 L7.4 8.6 V11.4 L11.8 9.7z" fill="#6a38c9"/><path d="M6.8 6.2 L5.6 8.2 H8z" fill="#fff"/></svg>
<div class="t s" style="left:113.8px;top:462px;font-size:8.14px;color:#1f6dbd;transform:scaleX(0.835);transform-origin:0 0;letter-spacing:0.35px;">Commande</div>
<div class="a" style="left:160.7px;top:455px;width:52.5px;height:19px;background:#f8fafd;border:1.2px solid #5a9ad5;border-radius:3px"></div>
<div class="t s" style="left:165.5px;top:462px;font-size:8.14px;color:#1f6dbd;transform:scaleX(0.847);transform-origin:0 0;letter-spacing:0.35px;">Créer contrat</div>
<div class="a" style="left:217.3px;top:455.2px;width:110px;height:18px;background:#c8c8c8;border-radius:3px"></div>
<div class="t s" style="left:221.7px;top:462px;font-size:8.14px;color:#6a6a6a;transform:scaleX(0.836);transform-origin:0 0;letter-spacing:0.35px;">Créer Convention de formation</div>
<svg class="a" style="left:7px;top:488px" width="13" height="13" viewBox="0 0 13 13"><path d="M1.5 1.5 L11 11" stroke="#e0a818" stroke-width="2.2" stroke-linecap="round"/><path d="M10.5 1.8 L2.5 10.5" stroke="#e0a818" stroke-width="2.6" stroke-linecap="round"/><path d="M9 1.2a2.3 2.3 0 1 0 3 3" fill="none" stroke="#e0a818" stroke-width="1.6"/></svg>
<div class="t s" style="left:20.9px;top:492px;font-size:8.14px;color:#b08424;transform:scaleX(0.780);transform-origin:0 0;letter-spacing:0.35px;">Paramétrer</div>
<div class="a" style="left:21px;top:498px;width:34px;height:1px;background:#d9c290"></div>
<svg class="a" style="left:61.5px;top:491.5px" width="7" height="5" viewBox="0 0 7 5"><path d="M0.8 0.8h5.4l-2.7 3.4z" fill="none" stroke="#333" stroke-width="1.2" stroke-linejoin="round"/></svg>
<div class="a" style="left:752px;top:483px;width:59px;height:23px;background:#0267b4;border-radius:2.5px"></div>
<div class="a" style="left:816px;top:483px;width:59px;height:23px;background:#0267b4;border-radius:2.5px"></div>
<div class="a" style="left:880px;top:483px;width:58.5px;height:23px;background:#0267b4;border-radius:2.5px"></div>
<svg class="a" style="left:761.5px;top:489px" width="12" height="12" viewBox="0 0 12 12"><circle cx="5.4" cy="5.3" r="4.6" fill="none" stroke="#fff" stroke-width="1.5" stroke-dasharray="0 4.5 24.5 0"/><circle cx="5.3" cy="5.2" r="2.1" fill="none" stroke="#fff" stroke-width="1.5"/><path d="M7.4 2.6V6.2Q7.4 7.8 8.8 7.7Q10.1 7.5 10.1 5.3" fill="none" stroke="#fff" stroke-width="1.4"/></svg>
<div class="t" style="left:774.2px;top:491px;font-size:8.72px;color:#e8f0f8;transform:scaleX(0.794);transform-origin:0 0;">Envoyer</div>
<svg class="a" style="left:819.5px;top:487px" width="15" height="15" viewBox="0 0 15 15"><path d="M1 1.5a0.8 0.8 0 0 1 .8-.8h9.2l2.7 2.7v9.7a.8.8 0 0 1-.8.8H1.8a.8.8 0 0 1-.8-.8z" fill="none" stroke="#fff" stroke-width="1.7"/><rect x="7" y="1.2" width="1.6" height="2.6" fill="#fff"/><rect x="3" y="6.6" width="8.6" height="5.6" fill="#a9c6e4"/><path d="M3.5 8.2h7.6M3.5 10h7.6" stroke="#7fa8d3" stroke-width="0.6"/></svg>
<div class="t" style="left:834.7px;top:491px;font-size:8.72px;color:#e8f0f8;transform:scaleX(0.844);transform-origin:0 0;">Enregistrer</div>
<svg class="a" style="left:887.5px;top:487.2px" width="15" height="15" viewBox="0 0 15 15"><circle cx="7.2" cy="7.2" r="6.8" fill="none" stroke="#dbe7f3" stroke-width="0.9"/><circle cx="7.2" cy="7.2" r="5.3" fill="#fff"/><path d="M5.2 5.2l4 4M9.2 5.2l-4 4" stroke="#0267b4" stroke-width="1.6"/></svg>
<div class="t" style="left:904px;top:491px;font-size:8.72px;color:#e8f0f8;transform:scaleX(0.818);transform-origin:0 0;">Annuler</div>
<div class="a" style="left:0px;top:507px;width:945px;height:1px;background:#fdfdfd"></div>
<div class="a" style="left:0px;top:508px;width:945px;height:1px;background:#3a3c40"></div>
<div class="a" style="left:0px;top:509px;width:945px;height:1px;background:#0d0e11"></div>
<div class="a" style="left:0px;top:508px;width:105px;height:1px;background:#6a6a6a"></div>
<div class="a" style="left:0px;top:509px;width:105px;height:1px;background:#262626"></div>
<div class="a" style="left:284px;top:508px;width:36px;height:1px;background:#c07a40"></div>
<div class="a" style="left:284px;top:509px;width:36px;height:1px;background:#a5571c"></div>
<div class="a" style="left:462px;top:508px;width:35px;height:1px;background:#8a8a8a"></div>
<div class="a" style="left:462px;top:509px;width:35px;height:1px;background:#4a4a4a"></div>
</body></html>
